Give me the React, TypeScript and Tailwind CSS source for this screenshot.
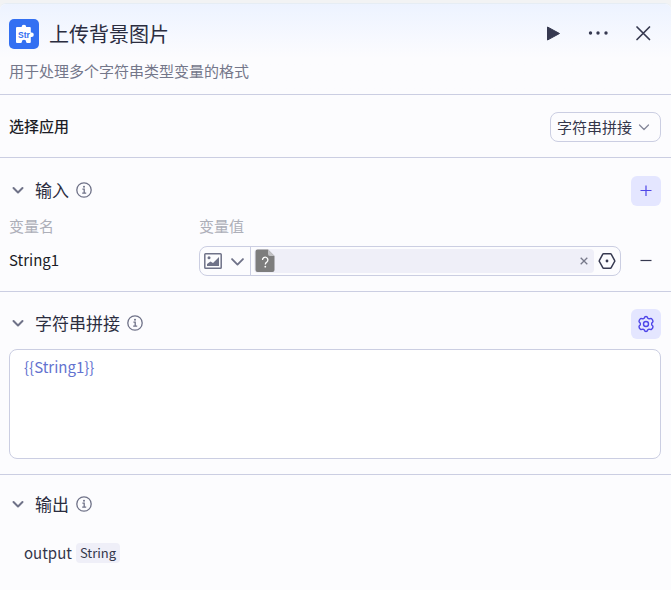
import { useState } from "react";
import type { ReactNode } from "react";

function ChevronIcon({ className, width = 2 }: { className: string; width?: number }) {
  return (
    <svg viewBox="0 0 14 14" className={className} fill="none" stroke="currentColor" strokeWidth={width} strokeLinecap="round" strokeLinejoin="round" aria-hidden="true">
      <path d="M2.500 5 7 9.500 11.500 5" />
    </svg>
  );
}

function InfoIcon() {
  return (
    <svg viewBox="0 0 16 16" className="size-4 shrink-0 text-[#6f7288]" fill="none" stroke="currentColor" strokeWidth="1.300" aria-hidden="true">
      <circle cx="8" cy="8" r="7.200" />
      <path d="M6.400 7.100H8.200V11M6.200 11.200H10.200" />
      <circle cx="8" cy="4.700" r="1" fill="currentColor" stroke="none" />
    </svg>
  );
}

function PuzzleLogo() {
  return (
    <svg viewBox="0 0 30 30" className="size-[30px] shrink-0" aria-hidden="true">
      <rect width="30" height="30" rx="5" fill="#3370f2" />
      <path
        d="M8 8h4.600a2.300 2.300 0 0 1 4.600 0H20.800a1 1 0 0 1 1 1v4.600h.8a2.200 2.200 0 0 1 0 4.400h-.8V23a1 1 0 0 1-1 1h-2.600a1 1 0 0 1-1-1 2.200 2.200 0 0 0-4.400 0 1 1 0 0 1-1 1H8a1 1 0 0 1-1-1V9a1 1 0 0 1 1-1z"
        fill="white"
      />
      <text x="9" y="18.500" fontSize="8.500" fontWeight="700" fill="#3370f2" fontFamily="Liberation Sans, Arial, sans-serif">
        Str
      </text>
    </svg>
  );
}

function SectionTitle({ title, open, onToggle, action }: { title: string; open: boolean; onToggle: () => void; action?: ReactNode }) {
  return (
    <div className="flex items-start justify-between">
      <div className="flex h-7 items-center gap-[7px]">
        <button type="button" aria-expanded={open} onClick={onToggle} className="flex items-center gap-2.5 pl-0.5 text-[#6f7288]">
          <ChevronIcon className="size-3.5" />
          <h2 className="text-[17px] leading-6 text-[#2b2d3f]">{title}</h2>
        </button>
        <InfoIcon />
      </div>
      {action}
    </div>
  );
}

const squareButton = "flex size-[30px] items-center justify-center rounded-md bg-[#e4e6ff] text-[#4f46e8]";

export default function App() {
  const [inputOpen, setInputOpen] = useState(true);
  const [joinOpen, setJoinOpen] = useState(true);
  const [outputOpen, setOutputOpen] = useState(true);

  return (
    <div className="min-h-screen bg-[#f2f3f4] pt-[3px] font-['Noto_Sans_CJK_SC',sans-serif] text-[15px] leading-6 text-[#34364a]">
      <main className="min-h-[calc(100vh-3px)] rounded-t-md border-t border-[#e6edf4] bg-[#fcfcfe]">
        <header className="rounded-t-md border-b border-[#cbcee2] bg-linear-to-b from-[#edf3ff] to-[#fcfcfe] to-60% px-[9px] pt-[15px] pb-[11px]">
          <div className="flex items-center justify-between">
            <div className="flex items-center gap-2.5">
              <PuzzleLogo />
              <h1 className="text-xl leading-[30px] text-[#2b2d3f]">上传背景图片</h1>
            </div>
            <div className="flex items-center gap-[25px] pr-[9px]">
              <button type="button" aria-label="运行" className="flex size-5 items-center justify-center text-[#363950]">
                <svg viewBox="0 0 20 20" className="size-5" fill="currentColor" stroke="currentColor" strokeWidth="1" strokeLinejoin="round" aria-hidden="true">
                  <path d="M4.500 3v13L16.500 9.500z" />
                </svg>
              </button>
              <button type="button" aria-label="更多" className="flex size-5 items-center justify-center text-[#363950]">
                <svg viewBox="0 0 20 20" className="size-5" fill="currentColor" aria-hidden="true">
                  <circle cx="2.500" cy="9" r="1.700" />
                  <circle cx="10" cy="9" r="1.700" />
                  <circle cx="18" cy="9" r="1.700" />
                </svg>
              </button>
              <button type="button" aria-label="关闭" className="flex size-5 items-center justify-center text-[#363950]">
                <svg viewBox="0 0 20 20" className="size-5" fill="none" stroke="currentColor" strokeWidth="1.700" strokeLinecap="round" aria-hidden="true">
                  <path d="M4 3 16.500 15.500M16.500 3 4 15.500" />
                </svg>
              </button>
            </div>
          </div>
          <p className="mt-2.5 text-[#74778a]">用于处理多个字符串类型变量的格式</p>
        </header>

        <section className="flex items-start justify-between border-b border-[#cbcee2] px-[9px] pt-[17px] pb-[15px]">
          <label htmlFor="app-select" className="leading-7 font-medium text-[#1b1c26]">选择应用</label>
          <div className="mr-px grid items-center">
            <select
              id="app-select"
              className="col-start-1 row-start-1 h-[30px] w-[111px] appearance-none rounded-lg border border-[#cbcee2] bg-transparent pl-1.5 text-[15px] text-[#34364a]"
            >
              <option>字符串拼接</option>
            </select>
            <ChevronIcon className="pointer-events-none col-start-1 row-start-1 mr-2.5 size-3.5 justify-self-end text-[#85889a]" width={1.3} />
          </div>
        </section>

        <section className="border-b border-[#cbcee2] pt-[18px] pr-2.5 pb-[15px] pl-[9px]">
          <SectionTitle
            title="输入"
            open={inputOpen}
            onToggle={() => setInputOpen(!inputOpen)}
            action={
              <button type="button" aria-label="添加变量" className={squareButton}>
                <svg viewBox="0 0 12 12" className="size-3" fill="none" stroke="currentColor" strokeWidth="1.200" aria-hidden="true">
                  <path d="M6 .5v10.500M.5 5.500h11" />
                </svg>
              </button>
            }
          />
          {inputOpen && (
            <table className="mt-2 w-full table-fixed border-collapse text-left">
              <thead>
                <tr className="text-[#adafb9]">
                  <th className="w-[190px] p-0 font-normal">变量名</th>
                  <th className="p-0 font-normal">变量值</th>
                  <th className="w-10 p-0" aria-label="操作" />
                </tr>
              </thead>
              <tbody>
                <tr>
                  <td className="p-0 pt-1.5 text-[#1b1c26]">String1</td>
                  <td className="p-0 pt-2">
                    <div className="flex h-[30px] items-stretch rounded-lg border border-[#cbcee2]">
                      <button type="button" aria-label="变量类型" className="flex w-[51px] items-center justify-between border-r border-[#cbcee2] px-1 text-[#6f7288]">
                        <svg viewBox="0 0 18 16" className="h-4 w-[18px]" fill="none" stroke="currentColor" strokeWidth="1.500" aria-hidden="true">
                          <rect x="0.800" y="0.800" width="16.400" height="14.400" rx="0.800" />
                          <path d="M3 13V11l3.500-2.500 2.500 1.500 6-6v9z" fill="currentColor" stroke="none" />
                          <circle cx="5" cy="4.800" r="1.500" fill="currentColor" stroke="none" />
                        </svg>
                        <ChevronIcon className="size-[17px]" width={1.5} />
                      </button>
                      <div className="my-0.5 ml-[3px] flex min-w-0 flex-1 items-center rounded bg-[#efeff8] pl-px">
                        <svg viewBox="0 0 20 24" className="h-6 w-5 shrink-0" aria-hidden="true">
                          <path d="M2.500 .5H13L19.500 7V21a2 2 0 0 1-2 2h-15a2 2 0 0 1-2-2V2.500a2 2 0 0 1 2-2z" fill="#7d7d7d" />
                          <path d="M13 .5 19.500 7H15a2 2 0 0 1-2-2z" fill="#c1c1c4" />
                          <path d="M7.500 11a2.700 2.700 0 1 1 4.300 2.100c-1 .7-1.500 1.100-1.500 2.300" fill="none" stroke="white" strokeWidth="1.300" />
                          <circle cx="10.300" cy="17.700" r="0.900" fill="white" />
                        </svg>
                        <input aria-label="String1 变量值" className="h-6 min-w-0 flex-1 bg-transparent px-1 outline-none" />
                        <button type="button" aria-label="清除" className="flex w-5 justify-center text-[#77798a]">
                          <svg viewBox="0 0 8 8" className="size-2" fill="none" stroke="currentColor" strokeWidth="1.300" aria-hidden="true">
                            <path d="M.7.7 7.300 7.300M7.300.7.7 7.300" />
                          </svg>
                        </button>
                      </div>
                      <button type="button" aria-label="引用变量" className="flex w-[26px] items-center justify-center text-[#363950]">
                        <svg viewBox="0 0 18 18" className="size-[18px]" fill="none" stroke="currentColor" strokeWidth="1.500" strokeLinejoin="round" aria-hidden="true">
                          <path d="M5.600 1.700h6.800a1 1 0 0 1 .8.5L16.600 8.400a1 1 0 0 1 0 1.100l-3.400 6.200a1 1 0 0 1-.8.500H5.600a1 1 0 0 1-.8-.5L1.400 9.500a1 1 0 0 1 0-1.100L4.800 2.200a1 1 0 0 1 .8-.5z" />
                          <circle cx="9" cy="9" r="1.400" fill="currentColor" stroke="none" />
                        </svg>
                      </button>
                    </div>
                  </td>
                  <td className="p-0 pt-2">
                    <button type="button" aria-label="删除变量" className="ml-auto flex size-[30px] items-center justify-center text-[#363950]">
                      <svg viewBox="0 0 12 12" className="size-3" fill="none" stroke="currentColor" strokeWidth="1.200" aria-hidden="true">
                        <path d="M.5 5.500h11" />
                      </svg>
                    </button>
                  </td>
                </tr>
              </tbody>
            </table>
          )}
        </section>

        <section className="border-b border-[#cbcee2] pt-[17px] pr-2.5 pb-[15px] pl-[9px]">
          <SectionTitle
            title="字符串拼接"
            open={joinOpen}
            onToggle={() => setJoinOpen(!joinOpen)}
            action={
              <button type="button" aria-label="拼接设置" className={squareButton}>
                <svg viewBox="0 0 18 18" className="size-[18px]" fill="none" stroke="currentColor" strokeWidth="1.400" strokeLinejoin="round" aria-hidden="true">
                  <path d="M7.300 3.100Q7.600 1.500 9 1.500t1.700 1.600l1.400.8q1.600-.6 2.500-.2 1.300 1.200 1.400 2.700-.2 1-1.300 1.700v1.800q1.100.7 1.300 1.700-.1 1.500-1.400 2.700-.9.400-2.500-.2l-1.400.8Q10.400 16.500 9 16.500t-1.700-1.600l-1.400-.8q-1.600.6-2.500.2Q2.100 13.100 2 11.600q.2-1 1.300-1.700V8.100Q2.200 7.400 2 6.400 2.100 4.900 3.400 3.700q.9-.4 2.500.2z" />
                  <circle cx="9" cy="9" r="2.500" />
                </svg>
              </button>
            }
          />
          {joinOpen && (
            <textarea
              aria-label="字符串拼接"
              defaultValue="{{String1}}"
              className="mt-2.5 block h-[110px] w-full resize-none rounded-lg border border-[#cbcee2] bg-white px-3.5 py-[5px] text-[#6372cf] outline-none"
            />
          )}
        </section>

        <section className="pt-[15px] pr-2.5 pb-6 pl-[9px]">
          <SectionTitle title="输出" open={outputOpen} onToggle={() => setOutputOpen(!outputOpen)} />
          {outputOpen && (
            <div className="mt-[23px] flex items-center gap-1 pl-[15px]">
              <span>output</span>
              <span className="rounded bg-[#efeff8] px-1 text-[13px] leading-5">String</span>
            </div>
          )}
        </section>
      </main>
    </div>
  );
}
